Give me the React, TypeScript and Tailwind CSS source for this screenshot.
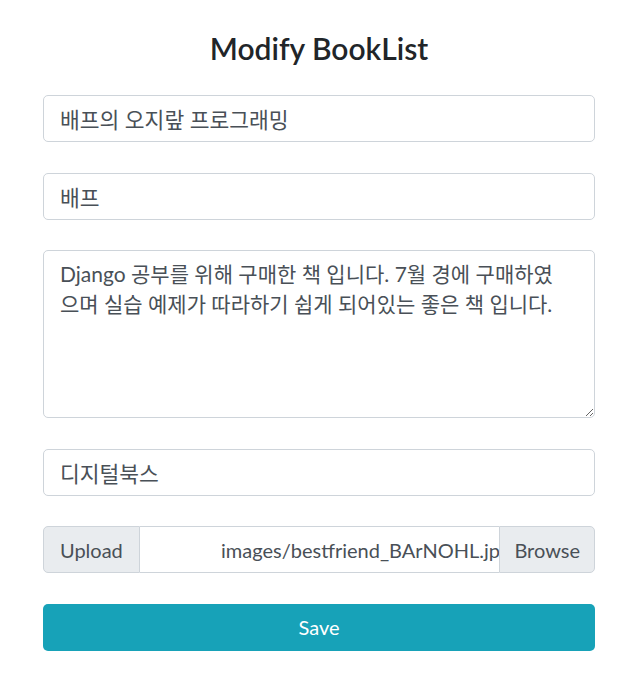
const font = "font-['Lato','Noto_Sans_CJK_KR',sans-serif]";

const desc =
  "Django 공부를 위해 구매한 책 입니다. 7월 경에 구매하였\n으며 실습 예제가 따라하기 쉽게 되어있는 좋은 책 입니다.";

function Field({ value }: { value: string }) {
  return (
    <input
      readOnly
      value={value}
      className="block w-full h-[47px] px-4 text-[21.5px] leading-[30px] text-[#495057] bg-white border border-[#ced4da] rounded-[5px] outline-none"
    />
  );
}

export default function App() {
  return (
    <div className={`${font} bg-white min-h-[689px] pl-[43px] pr-[45px] pt-[30px]`}>
      <h3 className="text-center text-[30px] leading-[36px] font-semibold text-[#212529] mb-[29px]">
        Modify BookList
      </h3>
      <form className="flex flex-col gap-[30.5px]">
        <Field value="배프의 오지랖 프로그래밍" />
        <Field value="배프" />
        <textarea
          readOnly
          rows={5}
          value={desc}
          className="block w-full h-[168px] px-4 py-2 text-[21px] leading-[30px] text-[#495057] bg-white border border-[#ced4da] rounded-[5px] outline-none"
        />
        <Field value="디지털북스" />
        <div className="flex h-[47px] text-[20px] text-[#495057]">
          <span className="flex items-center px-4 bg-[#e9ecef] border border-[#ced4da] rounded-l-[5px]">
            Upload
          </span>
          <div className="flex-1 min-w-0 flex items-center justify-end overflow-hidden whitespace-nowrap border-y border-[#ced4da] bg-white">
            <span className="-mr-[11px]">images/bestfriend_BArNOHL.jpg</span>
          </div>
          <span className="flex items-center px-[14px] bg-[#e9ecef] border border-[#ced4da] rounded-r-[5px]">
            Browse
          </span>
        </div>
        <button
          type="button"
          className="w-full h-[47px] text-[20px] text-white bg-[#17a2b8] rounded-[5px]"
        >
          Save
        </button>
      </form>
    </div>
  );
}
